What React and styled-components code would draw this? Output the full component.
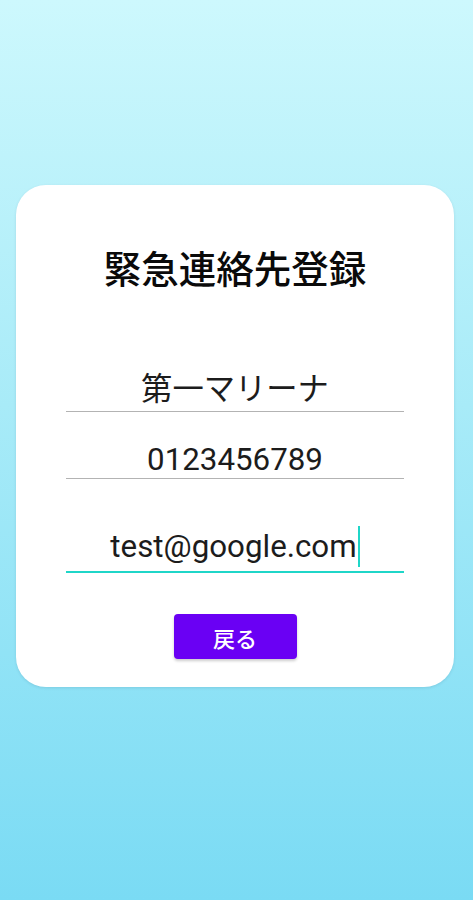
import React from "react"
import styled, { createGlobalStyle } from "styled-components"

const GlobalStyle = createGlobalStyle`
  html, body {
    margin: 0;
    padding: 0;
  }
  body {
    font-family: Roboto, "Noto Sans CJK JP", "Noto Sans", sans-serif;
  }
`

const Screen = styled.div`
  height: 900px;
  padding-top: 185px;
  box-sizing: border-box;
  background: linear-gradient(180deg, #cdf8fd 0%, #a8ebf8 45%, #7adbf4 100%);
`

const Card = styled.div`
  margin: 0 19px 0 16px;
  height: 502px;
  box-sizing: border-box;
  padding: 60px 50px 0;
  background: #ffffff;
  border-radius: 30px;
  box-shadow: 0 1px 3px rgba(0, 60, 90, 0.12);
  display: flex;
  flex-direction: column;
  align-items: stretch;
`

const Title = styled.h1`
  margin: 0;
  font-family: "Noto Sans CJK JP", sans-serif;
  font-size: 37.5px;
  line-height: 44px;
  font-weight: 500;
  color: #0a0a0a;
  text-align: center;
`

const Field = styled.div`
  margin-top: ${(p) => p.$gap}px;
  padding-bottom: ${(p) => p.$pad}px;
  font-size: 31.3px;
  line-height: 36px;
  color: #1c1c1c;
  text-align: center;
  border-bottom: ${(p) => (p.$focused ? "2px solid #1fd6c8" : "1px solid #b3b3b3")};
  white-space: nowrap;
`

const Caret = styled.span`
  display: inline-block;
  width: 2px;
  height: 41px;
  margin-left: 1px;
  vertical-align: -10px;
  background: #1fd6c8;
`

const BackButton = styled.button`
  align-self: center;
  margin-top: 41px;
  width: 123px;
  height: 45px;
  border: none;
  border-radius: 4px;
  background: #6a00f4;
  color: #ffffff;
  font-family: "Noto Sans CJK JP", sans-serif;
  font-size: 22px;
  font-weight: 500;
  box-shadow: 0 2px 3px rgba(0, 0, 0, 0.2);
  cursor: pointer;
`

export default function App() {
  return (
    <>
      <GlobalStyle />
      <Screen>
        <Card>
          <Title>緊急連絡先登録</Title>
          <Field $gap={83} $pad={3}>第一マリーナ</Field>
          <Field $gap={30} $pad={0}>0123456789</Field>
          <Field $gap={47} $pad={4} $focused>
            test@google.com
            <Caret />
          </Field>
          <BackButton>戻る</BackButton>
        </Card>
      </Screen>
    </>
  )
}
